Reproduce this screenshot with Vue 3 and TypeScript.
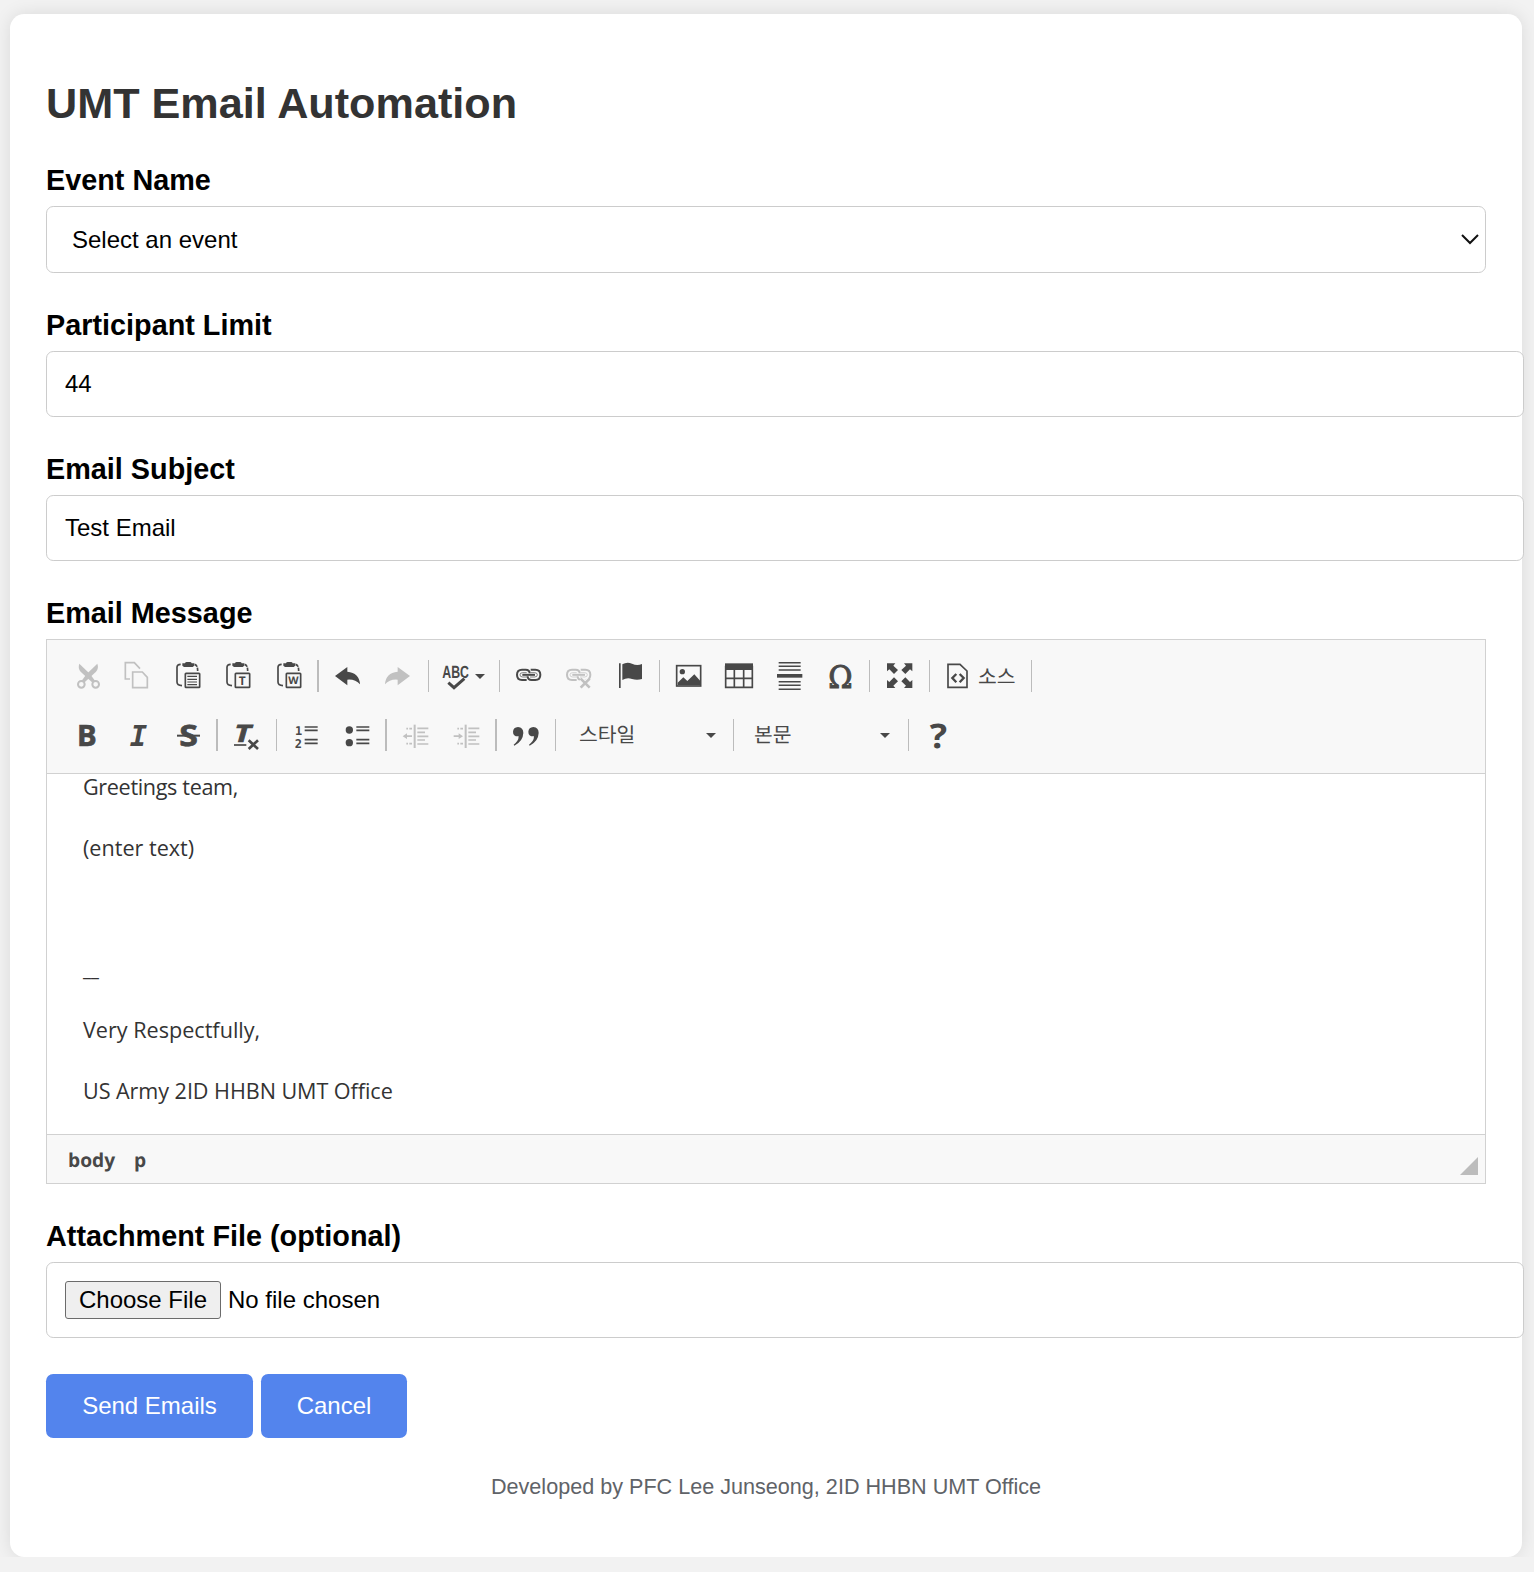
<script setup lang="ts">
import { ref } from 'vue'

interface Tool {
  kind: 'icon' | 'sep' | 'caret' | 'text'
  gap: number
  icon?: string
  label?: string
  width?: number
  off?: boolean
}

const clip =
  '<path d="M26 16Q15 16 15 25V69Q15 79 30 80" fill="none" stroke="currentColor" stroke-width="5"/>' +
  '<path d="M68 16Q77 18 77 36" fill="none" stroke="currentColor" stroke-width="5" stroke-dasharray="11 3"/>' +
  '<path d="M31 13h8q1-4 5-4h10q4 0 5 4h8v7l-5 4H36l-5-4z"/>' +
  '<rect x="40" y="43" width="43" height="42" rx="2" fill="none" stroke="currentColor" stroke-width="5"/>'

const chain =
  '<g fill="none" stroke="currentColor" stroke-width="6">' +
  '<path d="M44 63H30Q15 63 15 47.500Q15 32 30 32H41Q53 32 53 43"/>' +
  '<path d="M56 32H70Q85 32 85 47.500Q85 63 70 63H59Q47 63 47 52"/>' +
  '<path d="M31 47.500H69" stroke-width="6"/></g>' +
  '<path d="M46 54H32Q24 54 24 47.500Q24 41 32 41H44M56 41H68Q76 41 76 47.500Q76 54 68 54H54" fill="none" stroke="currentColor" stroke-width="2"/>'

const undo = '<path d="M9 51L46 24V38Q82 41 84 76Q70 60 46 62V79z"/>'

const dentLines =
  '<path d="M47 17V87" stroke="currentColor" stroke-width="6"/>' +
  '<path d="M55 28H88M55 40H78M55 52H88M55 63H78M55 75H88" stroke="currentColor" stroke-width="5"/>' +
  '<path d="M22 29h5m4 0h8M22 74h5m4 0h8" stroke="currentColor" stroke-width="5"/>'

const icons: Record<string, string> = {
  cut:
    '<path d="M19 14Q14 28 23 38L57 70L66 65L51 45z"/><path d="M73 14Q78 28 69 38L35 70L26 65L41 45z"/>' +
    '<g fill="none" stroke="currentColor" stroke-width="6"><circle cx="25" cy="76" r="10"/><circle cx="68" cy="76" r="10"/></g>',
  copy: '<path d="M27 60H13V11H40L57 29M35 39H64L79 55V86H35z" fill="none" stroke="currentColor" stroke-width="5"/>',
  paste: clip + '<path d="M46 52H75M46 61H75M46 69H75M46 77H75" stroke="currentColor" stroke-width="3.500"/>',
  pasteText: clip + '<text x="61" y="77" font-size="36" font-weight="700" text-anchor="middle" font-family="Open Sans">T</text>',
  pasteWord: clip + '<text x="61" y="76" font-size="32" font-weight="700" text-anchor="middle" font-family="Open Sans">W</text>',
  undo,
  redo: '<g transform="matrix(-1 0 0 1 93 0)">' + undo + '</g>',
  spell:
    '<text x="7" y="56" font-size="53" font-weight="700" font-family="Liberation Sans" textLength="80" lengthAdjust="spacingAndGlyphs">ABC</text>' +
    '<path d="M25 70L42 85L73 59" fill="none" stroke="#f8f8f8" stroke-width="15"/>' +
    '<path d="M25 71L42 86L73 59" fill="none" stroke="currentColor" stroke-width="9"/>',
  link: chain,
  unlink:
    chain +
    '<path d="M57 60L82 85M82 60L57 85" stroke="#f8f8f8" stroke-width="15"/><path d="M56 59L83 86M83 59L56 86" stroke="currentColor" stroke-width="8"/>',
  flag: '<path d="M12 13h5v74h-5zM22 16Q36 7 51 14T81 15V60Q66 65 51 60T22 63z"/>',
  image:
    '<rect x="14" y="20" width="72" height="61" fill="none" stroke="currentColor" stroke-width="5"/><circle cx="31" cy="38" r="8"/>' +
    '<path d="M17 79V71L34 55L46 66L67 46L85 66V79z"/>',
  table:
    '<path d="M9 13H93V33H9z"/><path d="M11 20V85H91V20M37 32V85M65 32V85M11 58H91" fill="none" stroke="currentColor" stroke-width="5"/>',
  rule:
    '<path d="M14 11H80M14 22H80M14 33H80M14 68H80M14 79H80M14 91H80" stroke="currentColor" stroke-width="4.500"/><path d="M9 45H85V56H9z"/>',
  omega:
    '<text x="10" y="86" font-size="93" font-family="DejaVu Serif" stroke="currentColor" stroke-width="3" textLength="73" lengthAdjust="spacingAndGlyphs">Ω</text>',
  maximize:
    '<path d="M12 13H37L31 20L45 33L33 45L19 31L12 37z"/><path d="M88 13H63L69 20L55 33L67 45L81 31L88 37z"/>' +
    '<path d="M12 87H37L31 80L45 67L33 55L19 69L12 63z"/><path d="M88 87H63L69 80L55 67L67 55L81 69L88 63z"/>',
  source:
    '<path d="M21 16H57L78 36V85H21z" fill="none" stroke="currentColor" stroke-width="5"/>' +
    '<path d="M46 45L34 57L46 70M56 45L68 57L56 70" fill="none" stroke="currentColor" stroke-width="7"/>',
  bold: '<text x="18" y="81" font-size="88" font-weight="700" font-family="Open Sans" stroke="currentColor" stroke-width="2">B</text>',
  italic: '<text x="23" y="81" font-size="87" font-weight="700" font-style="italic" font-family="DejaVu Sans Mono">I</text>',
  strike:
    '<text x="22" y="81" font-size="88" font-weight="700" font-family="Open Sans" stroke="currentColor" stroke-width="2" textLength="56" lengthAdjust="spacingAndGlyphs">S</text><path d="M15 50H84" stroke="currentColor" stroke-width="6"/>',
  clear:
    '<text x="13" y="69" font-size="72" font-weight="700" font-style="italic" font-family="Open Sans" stroke="currentColor" stroke-width="2" textLength="50" lengthAdjust="spacingAndGlyphs">T</text>' +
    '<path d="M12 78H49" stroke="currentColor" stroke-width="5"/><path d="M56 64L84 90M84 64L56 90" stroke="currentColor" stroke-width="8"/>',
  numbers:
    '<text x="15" y="47" font-size="36" font-weight="700" font-family="DejaVu Sans Mono">1</text>' +
    '<text x="14" y="86" font-size="36" font-weight="700" font-family="DejaVu Sans Mono">2</text>' +
    '<path d="M44 24H83M44 34H83M44 62H83M44 73H83" stroke="currentColor" stroke-width="5"/>',
  bullets:
    '<circle cx="25" cy="33" r="11"/><circle cx="25" cy="71" r="11"/><path d="M46 24H85M46 34H85M46 62H85M46 73H85" stroke="currentColor" stroke-width="5"/>',
  outdent: dentLines + '<path d="M11 52L24 43V49H39V54H24V60z"/>',
  indent: dentLines + '<path d="M39 52L26 43V49H11V54H26V60z"/>',
  quote:
    '<path d="M27 24Q43 25 43 42Q42 67 16 80L14 77Q29 66 29 52Q12 53 12 38Q13 25 27 24z"/>' +
    '<path d="M73 24Q89 25 89 42Q88 67 62 80L60 77Q75 66 75 52Q58 53 58 38Q59 25 73 24z"/>',
  help: '<text x="23" y="88" font-size="102" font-weight="700" font-family="Open Sans" textLength="52" lengthAdjust="spacingAndGlyphs">?</text>',
}

const i = (icon: string, gap: number, off = false): Tool => ({ kind: 'icon', icon, gap, off })
const sep = (gap: number, width = 1): Tool => ({ kind: 'sep', gap, width })
const caret = (gap: number): Tool => ({ kind: 'caret', gap })
const text = (label: string, gap: number, width: number): Tool => ({ kind: 'text', label, gap, width })

const rows: Tool[][] = [
  [
    i('cut', 26, true), i('copy', 16, true), i('paste', 19), i('pasteText', 18), i('pasteWord', 19), sep(12, 2),
    i('undo', 13), i('redo', 18, true), sep(14),
    i('spell', 11), caret(3), sep(14),
    i('link', 12), i('unlink', 18, true), i('flag', 21), sep(12),
    i('image', 12), i('table', 18), i('rule', 20), i('omega', 19), sep(12),
    i('maximize', 13), sep(14),
    i('source', 11), text('소스', 5, 38), sep(15),
  ],
  [
    i('bold', 24), i('italic', 19), i('strike', 18), sep(12, 2),
    i('clear', 12), sep(14),
    i('numbers', 13), i('bullets', 19), sep(12, 2),
    i('outdent', 12, true), i('indent', 19, true), sep(13, 2),
    i('quote', 12), sep(14),
    text('스타일', 23, 60), caret(67), sep(17),
    text('본문', 20, 60), caret(66), sep(18),
    i('help', 13),
  ],
]

const limit = ref('44')
const subject = ref('Test Email')
</script>

<template>
  <main class="card">
    <h1>UMT Email Automation</h1>
    <form @submit.prevent>
      <div class="field">
        <label>Event Name</label>
        <div class="select">
          <span>Select an event</span>
          <svg width="20" height="12" viewBox="0 0 20 12"><path d="M2 1L10 9L18 1" fill="none" stroke="#111" stroke-width="2" /></svg>
        </div>
      </div>
      <div class="field">
        <label>Participant Limit</label>
        <input v-model="limit" class="input" type="text" />
      </div>
      <div class="field">
        <label>Email Subject</label>
        <input v-model="subject" class="input" type="text" />
      </div>
      <div class="field message">
        <label>Email Message</label>
        <div class="editor">
          <div class="toolbar">
            <div v-for="(row, r) in rows" :key="r" class="row">
              <template v-for="(t, k) in row" :key="k">
                <svg v-if="t.kind === 'icon'" class="icon" :class="{ off: t.off }" :style="{ marginLeft: t.gap + 'px' }" viewBox="0 0 96 96" v-html="icons[t.icon!]"></svg>
                <span v-else-if="t.kind === 'sep'" class="sep" :style="{ marginLeft: t.gap + 'px', width: t.width + 'px' }"></span>
                <span v-else-if="t.kind === 'caret'" class="caret" :style="{ marginLeft: t.gap + 'px' }"></span>
                <span v-else class="tool-text" :style="{ marginLeft: t.gap + 'px', width: t.width + 'px' }">{{ t.label }}</span>
              </template>
            </div>
          </div>
          <div class="body">
            <p class="greeting">Greetings team,</p>
            <p>(enter text)</p>
            <p>&nbsp;</p>
            <p class="dash">__</p>
            <p>Very Respectfully,</p>
            <p class="office">US Army 2ID HHBN UMT Office</p>
          </div>
          <div class="path">
            <span>body</span><span>p</span>
            <svg class="grip" width="18" height="18" viewBox="0 0 18 18"><path d="M18 0V18H0z" fill="#bcbcbc" /></svg>
          </div>
        </div>
      </div>
      <div class="field attach">
        <label>Attachment File (optional)</label>
        <input class="input file" type="file" />
      </div>
      <div class="actions">
        <button type="submit" class="send">Send Emails</button>
        <button type="button" class="cancel">Cancel</button>
      </div>
    </form>
    <footer>Developed by PFC Lee Junseong, 2ID HHBN UMT Office</footer>
  </main>
</template>

<style>
html {
  background: #f2f2f2;
}
body {
  margin: 0;
}
</style>

<style scoped>
* {
  box-sizing: border-box;
}
.card {
  width: 1512px;
  height: 1543px;
  margin: 14px 0 0 10px;
  padding: 64px 36px 0;
  background: #fff;
  border-radius: 14.4px;
  box-shadow: 0 0 18px rgba(0, 0, 0, 0.1);
  font-family: 'Liberation Sans', Arial, sans-serif;
  color: #000;
}
h1 {
  margin: 0;
  height: 86px;
  font-size: 43.2px;
  line-height: 50px;
  color: #333;
}
.field {
  height: 144px;
}
.field label {
  display: block;
  height: 42px;
  font-size: 28.8px;
  line-height: 33px;
  font-weight: 700;
}
.field:first-child {
  height: 145px;
}
.select,
.input {
  display: flex;
  align-items: center;
  border: 1px solid #ccc;
  border-radius: 7.2px;
  font-family: inherit;
  font-size: 24px;
  background: #fff;
  color: #000;
}
.select {
  width: 1440px;
  height: 67px;
  padding: 0 5px 0 25px;
  justify-content: space-between;
}
.input {
  display: block;
  width: 1478px;
  height: 66px;
  margin: 0;
  padding: 0 18px;
}
.message {
  height: 623px;
}
.editor {
  width: 1440px;
  height: 545px;
  border: 1px solid #d1d1d1;
  display: flex;
  flex-direction: column;
}
.toolbar {
  height: 134px;
  padding-top: 20px;
  background: #f8f8f8;
  border-bottom: 1px solid #d1d1d1;
  text-rendering: geometricPrecision;
}
.row {
  display: flex;
  align-items: center;
  height: 32px;
  margin-bottom: 27px;
  color: #484848;
}
.icon {
  flex: none;
  width: 32px;
  height: 32px;
  fill: currentColor;
  overflow: visible;
}
.row:first-child .icon {
  margin-top: -2px;
}
.icon.off {
  opacity: 0.31;
}
.sep {
  flex: none;
  height: 32px;
  background: #bcbcbc;
}
.caret {
  flex: none;
  border: 5px solid transparent;
  border-top-color: #484848;
  border-bottom: 0;
}
.tool-text {
  flex: none;
  height: 32px;
  font: 20.4px/30px 'Noto Sans CJK KR', sans-serif;
  white-space: nowrap;
}
.row:last-child .tool-text {
  line-height: 28px;
}
.body {
  height: 360px;
  padding-left: 36px;
  overflow: hidden;
  font-family: 'Open Sans', 'Noto Sans', sans-serif;
  font-size: 21.6px;
  color: #333;
}
.body p {
  margin: 0;
  height: 60.8px;
  line-height: 26px;
}
.body .greeting {
  letter-spacing: -0.35px;
}
.body .office {
  letter-spacing: -0.06px;
}
.body .dash {
  font-size: 18px;
}
.path {
  display: flex;
  align-items: center;
  gap: 19px;
  height: 49px;
  padding: 0 7px 0 21px;
  border-top: 1px solid #d1d1d1;
  background: #f8f8f8;
  font: 700 19.2px 'Open Sans', sans-serif;
  color: #484848;
  text-rendering: geometricPrecision;
}
.grip {
  margin: 14px 0 0 auto;
}
.attach {
  height: 154px;
}
.file {
  height: 76px;
  padding: 18px;
}
.file::file-selector-button {
  height: 38px;
  width: 156px;
  padding: 0;
  margin: 0 7px 0 0;
  border: 1px solid #6b6b6b;
  border-radius: 3px;
  background: #efefef;
  font: 24px 'Liberation Sans', sans-serif;
  color: #000;
}
.actions {
  display: flex;
  gap: 8px;
  height: 96px;
}
.actions button {
  height: 64px;
  padding: 0;
  border: 0;
  border-radius: 7.2px;
  background: #5384ed;
  color: #fff;
  font: 24px 'Liberation Sans', sans-serif;
}
.send {
  width: 207px;
}
.cancel {
  width: 146px;
}
footer {
  text-align: center;
  font-size: 21.6px;
  line-height: 34px;
  color: #5f6368;
}
</style>
